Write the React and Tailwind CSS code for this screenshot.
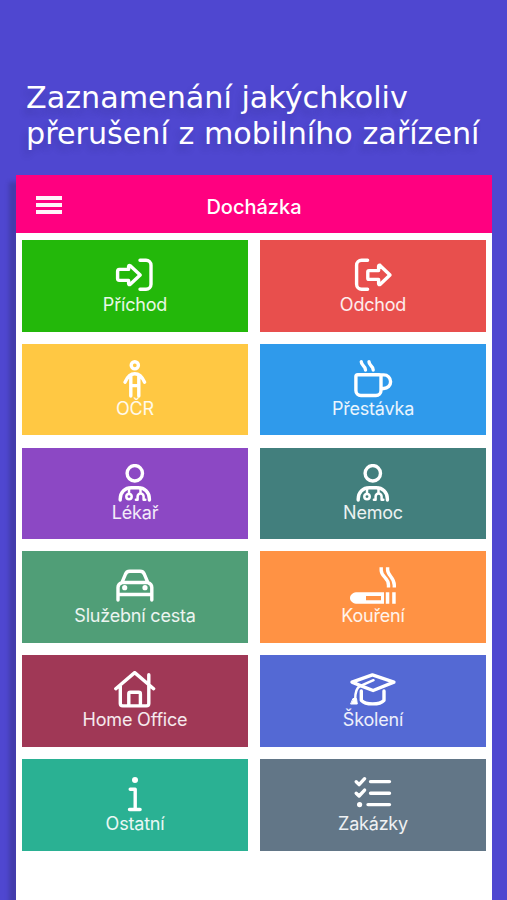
import React from 'react';

const icons = {
  enter: (
    <>
      <path d="M29 4.300h6a5 5 0 0 1 5 5v19a5 5 0 0 1-5 5H29" />
      <path d="M19 9.600 29.200 19 19 28.600q-1.400.3-1.400-1v-3.200H8.400a2 2 0 0 1-1.800-2v-7a2 2 0 0 1 1.800-2h9.200v-3q.2-1 1.400-.8Z" />
    </>
  ),
  leave: (
    <>
      <path d="M18.600 4.300h-6a5 5 0 0 0-5 5v19a5 5 0 0 0 5 5h6" />
      <path d="m31 9.600 10 9.400-10 9.600q-1.400.3-1.400-1v-4.200H20a1.200 1.200 0 0 1-1.200-1.200v-6.400a1.200 1.200 0 0 1 1.200-1.200h9.600v-4.600q.2-1 1.400-.8Z" />
    </>
  ),
  person: (
    <>
      <circle cx="23.8" cy="5.3" r="3.6" />
      <path d="M14 22.200c2-4.400 4.600-8.400 9.800-8.400s7.800 4 9.800 8.400M19.800 15v21M27.800 15v21M19.800 25.600h8" />
    </>
  ),
  coffee: (
    <>
      <path d="M6.900 16.500q0-1.800 1.800-1.800h21.500q1.800 0 1.800 1.800v14a5 5 0 0 1-5 5H11.900a5 5 0 0 1-5-5ZM32.200 14.900h2.600a6.800 6.800 0 0 1 0 13.600h-2.600" />
      <path d="M12.300 1.800c0 4.300 4.200 3.600 4.200 8.200M20 1.800c0 4.300 4.200 3.600 4.200 8.200" />
    </>
  ),
  doctor: (
    <>
      <circle cx="23.8" cy="9.3" r="7.7" />
      <path d="M9.200 36v-1c0-7.200 5-11.300 11.200-11.300h6.800c6.200 0 11.200 4.100 11.200 11.300v1" />
      <g strokeWidth="2.5">
        <path d="M18 24v5.500M29.500 24v4.500M24.900 35.800h1.700v-3.400a3 3 0 0 1 6 0v3.400h1.700" />
        <circle cx="18" cy="32.6" r="2.7" />
      </g>
    </>
  ),
  car: (
    <>
      <path d="M7 33V20.500q0-3.500 3.900-4.800L14.400 7.400q1-3.200 4.300-3.200h10.400q3.300 0 4.300 3.200l3.500 8.300q3.900 1.300 3.900 4.800V33M10.900 15.500h26M7 27.500h33.800" />
      <circle cx="13.7" cy="20.7" r="2.6" fill="currentColor" stroke="none" />
      <circle cx="34" cy="20.7" r="2.6" fill="currentColor" stroke="none" />
    </>
  ),
  smoking: (
    <>
      <path
        fill="currentColor"
        stroke="none"
        fillRule="evenodd"
        d="M7 25.200h28v11.500H7C-1 35.500-1 26.400 7 25.200ZM17 29v4.300h15V29ZM36.800 25.200h3.500v11.500h-3.500ZM43.200 25.200h3.500v11.500h-3.500Z"
      />
      <path strokeLinecap="butt" d="M32.200.2v3c0 7 7.300 7 7.300 15v2.400M38.600.2v2.500c0 6 6.700 7.500 6.700 15.500v2.400" />
    </>
  ),
  home: (
    <path d="M4.800 17.700 23.700 1.600l18.900 16.100M9.300 15v17.500q0 2.400 2.400 2.400h23.700q2.400 0 2.400-2.400V3.800M17.800 34.500V22.900q0-1.600 1.600-1.600h8.400q1.600 0 1.600 1.600v11.600" />
  ),
  school: (
    <>
      <path d="M3 11.200 23.400 3.900l21.500 7.300-20.800 8.300-12-4.700Z" />
      <path strokeWidth="2.5" d="M24.500 9.200 11 15.200q-4.700 2.300-4.800 13" />
      <path d="M12.300 20v9.300c4.200 4.800 18.500 4.800 22.700 0V20" />
      <path fill="currentColor" strokeWidth="1" d="M4.300 27.500h3.200l.8 5.500H2Z" />
    </>
  ),
  info: (
    <>
      <circle cx="24" cy="5" r="3" fill="currentColor" stroke="none" />
      <path d="M19.200 14.300h5v20M18.500 34.500h10.600" />
    </>
  ),
  tasks: (
    <>
      <path d="m7.200 6.800 2.900 2.800 5.500-5.900M7.200 18.200l2.900 2.800 5.500-5.900M21.500 6.600h19M21.500 18.200h19M19 29.600h21.500" />
      <circle cx="10.6" cy="29.6" r="2.6" fill="currentColor" stroke="none" />
    </>
  ),
};

const tiles = [
  { label: 'Příchod', icon: 'enter', color: 'bg-[#23b80a]' },
  { label: 'Odchod', icon: 'leave', color: 'bg-[#e84f4d]' },
  { label: 'OČR', icon: 'person', color: 'bg-[#ffc843]' },
  { label: 'Přestávka', icon: 'coffee', color: 'bg-[#2f9aeb]' },
  { label: 'Lékař', icon: 'doctor', color: 'bg-[#8c48c4]' },
  { label: 'Nemoc', icon: 'doctor', color: 'bg-[#427f7d]' },
  { label: 'Služební cesta', icon: 'car', color: 'bg-[#509e77]' },
  { label: 'Kouření', icon: 'smoking', color: 'bg-[#ff9244]' },
  { label: 'Home Office', icon: 'home', color: 'bg-[#a03856]' },
  { label: 'Školení', icon: 'school', color: 'bg-[#5469d4]' },
  { label: 'Ostatní', icon: 'info', color: 'bg-[#2ab193]' },
  { label: 'Zakázky', icon: 'tasks', color: 'bg-[#627687]' },
];

function Tile({ label, icon, color }) {
  return (
    <button className={`${color} flex h-[91.7px] flex-col items-center pt-4 text-white`}>
      <svg
        className="h-10 w-12 shrink-0"
        viewBox="0 0 48 40"
        fill="none"
        stroke="currentColor"
        strokeWidth="3.4"
        strokeLinecap="round"
        strokeLinejoin="round"
      >
        {icons[icon]}
      </svg>
      <span className="-mt-[1.9px] text-lg leading-[22px] tracking-[-0.2px] text-white/90">{label}</span>
    </button>
  );
}

export default function App() {
  return (
    <div className="flex h-[900px] w-[507px] flex-col overflow-hidden bg-[#4f47d0] font-['Inter',sans-serif]">
      <h1 className="h-[174.6px] shrink-0 pt-[80px] pl-[26px] font-['DejaVu_Sans',sans-serif] text-[30.2px] leading-9 whitespace-nowrap text-white [text-shadow:-3px_6px_6px_rgba(30,30,90,0.2)]">
        Zaznamenání jakýchkoliv
        <br />
        přerušení z mobilního zařízení
      </h1>
      <main className="ml-4 w-[476px] flex-1 bg-white shadow-[-7px_7px_4px_rgba(40,40,90,0.3)]">
        {/* Top bar */}
        <header className="grid h-[58.9px] grid-cols-[80px_1fr_80px] items-center bg-[#ff0080] text-white">
          <button className="mt-[2px] ml-5 flex w-[26px] flex-col gap-[3.4px]" aria-label="Menu">
            <span className="h-[4px] bg-white/95" />
            <span className="h-[4px] bg-white/95" />
            <span className="h-[4px] bg-white/95" />
          </button>
          <h2 className="pt-[5px] text-center text-[20px] font-medium">Docházka</h2>
        </header>
        {/* Actions */}
        <div className="grid grid-cols-2 gap-x-3 gap-y-[12.1px] px-1.5 pt-[6.5px]">
          {tiles.map((tile) => (
            <Tile key={tile.label} {...tile} />
          ))}
        </div>
      </main>
    </div>
  );
}
